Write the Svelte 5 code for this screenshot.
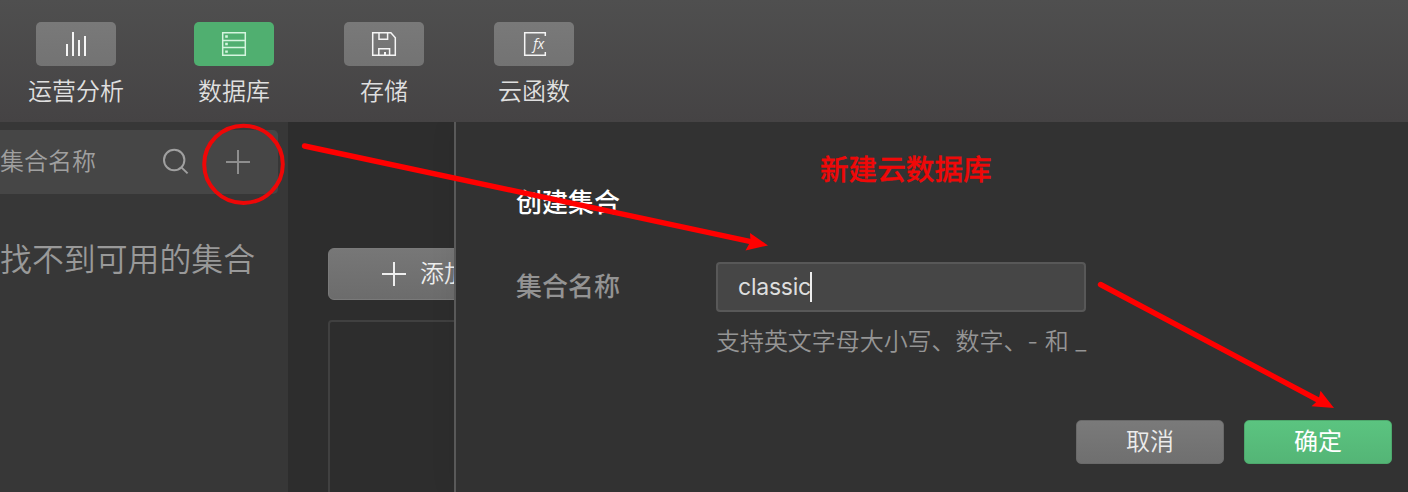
<script>
  const tools = [
    { id: 'analytics', label: '运营分析' },
    { id: 'database', label: '数据库', active: true },
    { id: 'storage', label: '存储' },
    { id: 'functions', label: '云函数' }
  ];
  let name = $state('classic');
</script>

<div class="app">
  <header class="toolbar">
    {#each tools as tool (tool.id)}
      <div class="tool">
        <div class="tile" class:active={tool.active}>
          <svg width="32" height="32" viewBox="0 0 32 32" fill="none" stroke="currentColor" stroke-width="1.5">
            {#if tool.id === 'analytics'}
              <path d="M7 16v12M13 4v24M19 12v16M25 8v20" stroke-width="2" />
            {:else if tool.id === 'database'}
              <path d="M4.7 4.7h22.6v22.6H4.7zM4.7 12.4h22.6M4.7 19.6h22.6" />
              <path d="M7.2 8.5h2.6M7.2 16h2.6M7.2 23.6h2.6" stroke-width="2.4" />
            {:else if tool.id === 'storage'}
              <path d="M4.7 4.7h18.2l4.4 5v17.6H4.7zM11 4.7v6.6h8.6V4.7M10.8 27.3v-6.6h10.8v6.6" />
              <path d="M17 24v3.2" stroke-width="2" />
            {:else}
              <path d="M27.3 8V4.7H6.7v22.6h20.6V24" />
              <text x="15.200" y="20.800">fx</text>
            {/if}
          </svg>
        </div>
        <span class="label">{tool.label}</span>
      </div>
    {/each}
  </header>

  <main class="body">
    <aside class="sidebar">
      <div class="search">
        <span class="search-text">集合名称</span>
        <svg class="find" width="28" height="28" viewBox="0 0 28 28" fill="none" stroke="currentColor" stroke-width="2">
          <circle cx="12.2" cy="12" r="10.2" />
          <path d="M19.4 19.4l6.2 6" />
        </svg>
        <svg class="add" width="24" height="24" viewBox="0 0 24 24" stroke="currentColor" stroke-width="2">
          <path d="M0 12h24M12 0v24" />
        </svg>
      </div>
      <p class="empty">找不到可用的集合</p>
    </aside>

    <section class="records">
      <button class="add-record">
        <svg width="24" height="24" viewBox="0 0 24 24" stroke="currentColor" stroke-width="2">
          <path d="M0 12h24M12 0v24" />
        </svg>
        <span>添加</span>
      </button>
      <div class="list"></div>
    </section>

    <section class="dialog">
      <h2>创建集合</h2>
      <div class="field">
        <span class="field-label">集合名称</span>
        <div class="control">
          <div class="input">{name}<i class="caret"></i></div>
          <p class="hint">支持英文字母大小写、数字、- 和 _</p>
        </div>
      </div>
      <div class="actions">
        <button class="btn">取消</button>
        <button class="btn primary">确定</button>
      </div>
    </section>
  </main>

  <div class="note">新建云数据库</div>
  <svg class="marks" width="1408" height="492" viewBox="0 0 1408 492" fill="none" stroke="#f00" stroke-linecap="round">
    <ellipse cx="243.5" cy="164.3" rx="39.3" ry="38.6" stroke="#ee0707" stroke-width="4" />
    <path d="M304.5 146L752 241.8M1100.5 284.5L1319 400.5" stroke-width="5.4" />
    <path d="M768 245.4L750 233L750.5 241.5L745.5 250.5ZM1334 408L1320.5 390.8L1318.5 400L1311.5 406.3Z" fill="#f00" stroke="none" />
  </svg>
</div>

<style>
  :global(body) {
    margin: 0;
    background: #323232;
  }
  .app {
    position: relative;
    display: flex;
    flex-direction: column;
    width: 1408px;
    height: 492px;
    overflow: hidden;
    font-family: Inter, "Noto Sans CJK SC", sans-serif;
    font-size: 24px;
    color: #ddd;
  }
  svg {
    display: block;
    flex: none;
  }
  h2, p {
    margin: 0;
  }
  button {
    font: inherit;
    color: inherit;
    border: 0;
    padding: 0;
  }
  .toolbar {
    box-sizing: border-box;
    flex: none;
    display: flex;
    gap: 70px;
    height: 122px;
    padding: 22px 0 0 36px;
    background: linear-gradient(#4f4f4f, #454344);
  }
  .tool {
    display: flex;
    flex-direction: column;
    align-items: center;
    width: 80px;
  }
  .tool:first-child {
    margin-right: 8px;
  }
  .tile {
    display: flex;
    align-items: center;
    justify-content: center;
    width: 80px;
    height: 44px;
    border-radius: 5px;
    background: linear-gradient(#797979, #737373);
    color: #f5f5f5;
  }
  .tile.active {
    background: #50af70;
    color: #d5f5df;
  }
  .tile text {
    font: italic 500 14px "Open Sans", sans-serif;
    fill: currentColor;
    stroke: none;
  }
  .label {
    margin-top: 10px;
    line-height: 32px;
    white-space: nowrap;
    font-weight: 350;
    color: #dfdfdf;
  }
  .body {
    flex: 1;
    display: flex;
    min-height: 0;
  }
  .sidebar {
    box-sizing: border-box;
    flex: none;
    width: 288px;
    padding: 8px 10px 0 0;
    background: #373737;
    color: #a0a0a0;
    font-weight: 350;
  }
  .search {
    display: flex;
    align-items: center;
    height: 64px;
    border-radius: 0 5px 5px 0;
    background: #464646;
  }
  .search-text {
    line-height: 32px;
  }
  .find {
    margin-left: 66px;
  }
  .add {
    margin-left: 36px;
    color: #8e8e8e;
  }
  .empty {
    margin-top: 44px;
    font-size: 31.900px;
    line-height: 44px;
    white-space: nowrap;
    color: #999;
  }
  .records {
    box-sizing: border-box;
    flex: none;
    width: 166px;
    padding: 126px 0 0 40px;
    overflow: hidden;
    background: #2d2d2d;
  }
  .add-record {
    box-sizing: border-box;
    display: flex;
    align-items: center;
    gap: 14px;
    width: 240px;
    height: 52px;
    padding-left: 53px;
    border: 1px solid #7a7a7a;
    border-radius: 6px;
    background: linear-gradient(#777, #6c6c6c);
    color: #eee;
    font-weight: 350;
    line-height: 32px;
  }
  .add-record span {
    white-space: nowrap;
  }
  .list {
    width: 240px;
    height: 240px;
    margin-top: 20px;
    border: 2px solid #404040;
    border-radius: 4px 0 0;
  }
  .dialog {
    box-sizing: border-box;
    flex: 1;
    padding: 61px 16px 0 60px;
    border-left: 2px solid #595959;
    background: #323232;
    box-shadow: -2px 0 24px rgba(0, 0, 0, 0.06);
    clip-path: inset(0 0 0 -30px);
  }
  h2 {
    font-size: 26px;
    line-height: 40px;
    font-weight: 500;
    color: #fff;
  }
  .field {
    display: flex;
    margin-top: 39px;
  }
  .field-label {
    width: 200px;
    font-size: 26px;
    font-weight: 500;
    line-height: 50px;
    color: #939393;
  }
  .input {
    box-sizing: border-box;
    display: flex;
    align-items: center;
    width: 370px;
    height: 50px;
    padding-left: 20px;
    border: 2px solid #585858;
    border-radius: 4px;
    background: #464646;
    font-size: 23px;
    font-weight: 400;
    letter-spacing: -0.25px;
    color: #dedede;
  }
  .caret {
    width: 2px;
    height: 30px;
    margin-left: -1px;
    background: #eee;
  }
  .hint {
    margin-top: 14px;
    line-height: 32px;
    font-weight: 350;
    letter-spacing: -0.05px;
    white-space: nowrap;
    color: #959595;
  }
  .actions {
    display: flex;
    justify-content: flex-end;
    gap: 20px;
    margin-top: 62px;
  }
  .btn {
    box-sizing: border-box;
    width: 148px;
    height: 44px;
    border: 1px solid #696969;
    border-radius: 5px;
    background: linear-gradient(#7a7a7a, #6f6f6f);
    color: #ececec;
    font-weight: 350;
    line-height: 32px;
  }
  .btn.primary {
    border-color: #4da86c;
    background: linear-gradient(#5bc480, #54b576);
    color: #fff;
    font-weight: 400;
  }
  .note {
    position: absolute;
    left: 820px;
    top: 150px;
    font-size: 28.6px;
    line-height: 40px;
    font-weight: 500;
    color: #f00808;
    -webkit-text-stroke: 0.300px #f00808;
  }
  .marks {
    position: absolute;
    inset: 0;
    pointer-events: none;
  }
</style>
